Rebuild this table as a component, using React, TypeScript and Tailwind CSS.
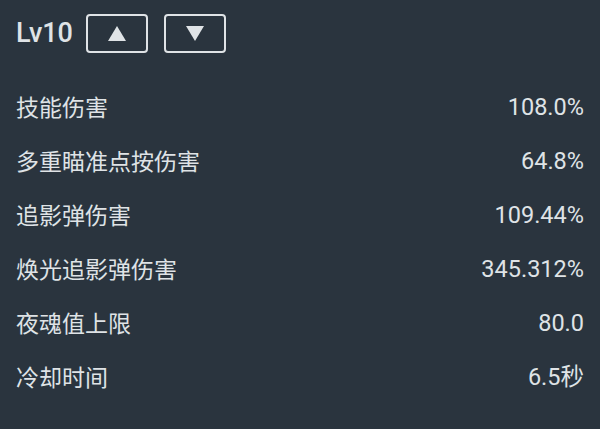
import React from "react";

const rows: [string, string][] = [
  ["技能伤害", "108.0%"],
  ["多重瞄准点按伤害", "64.8%"],
  ["追影弹伤害", "109.44%"],
  ["焕光追影弹伤害", "345.312%"],
  ["夜魂值上限", "80.0"],
  ["冷却时间", "6.5秒"],
];

export default function App() {
  return (
    <div
      className="w-[600px] h-[429px] bg-[#2a343e] text-[#dfe3e6] px-4 overflow-hidden"
      style={{ fontFamily: "Roboto, 'Noto Sans CJK SC', sans-serif" }}
    >
      <div className="flex items-center h-[39px] mt-[14px]">
        <span className="text-[27px] font-medium leading-none w-[70px]">Lv10</span>
        <button className="w-[62px] h-[39px] border-2 border-[#dfe3e6] rounded-[4px] flex items-center justify-center">
          <svg width="18" height="15" viewBox="0 0 18 15">
            <polygon points="9,0 18,15 0,15" fill="#dfe3e6" />
          </svg>
        </button>
        <button className="ml-[16px] w-[62px] h-[39px] border-2 border-[#dfe3e6] rounded-[4px] flex items-center justify-center">
          <svg width="18" height="15" viewBox="0 0 18 15">
            <polygon points="0,0 18,0 9,15" fill="#dfe3e6" />
          </svg>
        </button>
      </div>
      <div className="mt-[28px] flex flex-col">
        {rows.map(([k, v]) => (
          <div key={k} className="flex items-center justify-between h-[54px] leading-none">
            <span className="text-[23px]">{k}</span>
            <span className="text-[23.5px] font-normal">{v}</span>
          </div>
        ))}
      </div>
    </div>
  );
}
